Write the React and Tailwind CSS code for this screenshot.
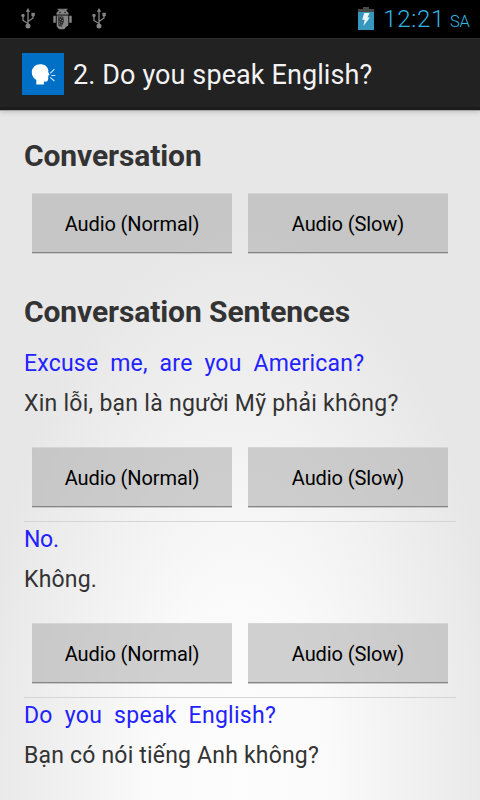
import clsx from "clsx";

const sentences = [
    { english: "Excuse  me,  are  you  American?", vietnamese: "Xin lỗi, bạn là người Mỹ phải không?", englishClass: "tracking-[0.22px]", vietnameseClass: "tracking-[0.27px]" },
    { english: "No.", vietnamese: "Không.", englishClass: "-tracking-[0.3px]", vietnameseClass: "tracking-[0.2px]" },
    { english: "Do  you  speak  English?", vietnamese: "Bạn có nói tiếng Anh không?", englishClass: "tracking-[0.28px]", vietnameseClass: "tracking-[0.19px]" },
];

const UsbIcon = () => (
    <svg width="16" height="22" viewBox="0 0 16 22" fill="none" stroke="#858585" strokeWidth="1.3">
        <path d="M8 3v14M8 15.5 3 12.5V8M8 13.5l5-3.5V6.5" />
        <path d="M8 0l2.2 3.8H5.8zM8 15.6a2.5 2.5 0 1 1 0 5A2.5 2.5 0 1 1 8 15.6z" fill="#858585" stroke="none" />
        <circle cx="3" cy="7.5" r="1.7" fill="#858585" stroke="none" />
        <path d="M11.4 4.8h3.4v3.4h-3.4z" fill="#858585" stroke="none" />
    </svg>
);

const DebugIcon = () => (
    <svg width="19" height="22" viewBox="0 0 19 22" fill="#858585">
        <path d="M4.6.8 6 2.6a7 7 0 0 1 7 0L14.4.8M3.6 6.2a6 5 0 0 1 11.8 0z" stroke="#858585" strokeWidth=".7" />
        <path d="M3.7 7.6h11.6v10l-2.6 1.6-1.4 2H6.2l-2.5-2.6zM.3 7.8h2.5v7H.3zM16.2 7.8h2.5v7h-2.5z" />
        <circle cx="7" cy="4.5" r=".7" fill="#000" />
        <circle cx="12" cy="4.5" r=".7" fill="#000" />
        {/* Spotted belly */}
        <path d="M4.8 8.6h5.4l.8 4.4-2.3 5.8-3.2-.8z" fill="#2c2c2c" />
        <path d="M5.6 10h1M8.4 9.4h1M7 11.6h1M9.2 12.4h1M5.4 13.4h1M7.8 14.4h1M6 15.8h1M7.6 17h1" stroke="#858585" strokeWidth="1" />
    </svg>
);

const BatteryIcon = () => (
    <svg width="16" height="24" viewBox="0 0 16 24">
        <path d="M5 0h6v2h5v4H0V2h5z" fill="#484848" />
        <path d="M0 5h16v18H0z" fill="#3597bd" />
        <path d="M6.2 6h5.4L9.5 10.4h2.4L5.4 19l1.3-6.2H4.2z" fill="#e9f5f9" />
    </svg>
);

// Talking head launcher icon
const AppIcon = () => (
    <svg className="shrink-0 mb-px" width="42" height="42" viewBox="0 0 42 42">
        <path d="M0 0h42v42H0z" fill="#0070c6" />
        <path d="M14.3 31.6V27c-2.8-2-4.5-4.6-4.5-7.6 0-4.9 3.7-8.1 8.5-8.1 4.2 0 7.4 2 8.1 6.2l-.2 1.5 1.4 2.9-1.5.7.5 1-.8.7.6.7-.8 2.8c-.7 1.2-2.1.9-3.7.8v3z" fill="#fff" />
        <path d="m28.2 20.3 4.2-4.2M29.3 22.5h4M28.2 24.3l4.2 3.7" stroke="#d3e8f7" strokeWidth="1.1" />
    </svg>
);

const StatusBar = () => (
    <div className="h-[38px] bg-black flex items-center pl-5 pr-[10px]">
        <UsbIcon />
        <div className="ml-[17px] mr-[19px]"><DebugIcon /></div>
        <UsbIcon />
        <div className="ml-auto flex items-baseline text-[#33b5e5]">
            <div className="self-center mr-[9px]"><BatteryIcon /></div>
            <span className="text-2xl leading-[40px] font-light tracking-[0.7px]">12:21</span>
            <span className="ml-[5px] text-[16.5px] w-5 font-light -tracking-[0.3px]">SA</span>
        </div>
    </div>
);

const ActionBar = () => (
    <header className="relative h-[72px] shrink-0 bg-[#222] border-t border-[#2c2c2c] flex items-center pl-[22px] shadow-[inset_0_-3px_0_#1b1b1b,0_1px_0_#a5a5a5,0_2px_5px_#0000002e]">
        <AppIcon />
        <h1 className="ml-[9px] pt-px text-[27px] tracking-[0.1px] text-[#f3f3f3] whitespace-nowrap">2. Do you speak English?</h1>
    </header>
);

const AudioButton = ({ label }) => (
    <button className="h-[60px] flex-1 bg-[#a6a6a6]/50 border-t border-t-[#d5d5d5] border-b border-b-[#858585] shadow-[0_1px_0_#c9c9c9] pt-[2px] text-[20px] -tracking-[0.1px] text-black">
        {label}
    </button>
);

const AudioButtons = () => (
    <div className="flex gap-4 px-2">
        <AudioButton label="Audio (Normal)" />
        <AudioButton label="Audio (Slow)" />
    </div>
);

const Sentence = ({ english, vietnamese, englishClass, vietnameseClass, last }) => (
    <li className={clsx(!last && "h-44 border-b border-[#d5d5d5]")}>
        <p className={clsx("h-[39px] leading-[36px] text-[23px] text-[#2222ff] whitespace-pre", englishClass)}>{english}</p>
        <p className={clsx("h-[62px] leading-[38px] text-[23px] text-[#333] whitespace-pre", vietnameseClass)}>{vietnamese}</p>
        {!last && <AudioButtons />}
    </li>
);

const App = () => {
    return (
        <div className="w-[480px] h-[800px] overflow-hidden flex flex-col font-['Roboto',sans-serif]">
            <StatusBar />
            <ActionBar />
            <main className="flex-1 min-h-0 overflow-hidden px-6 bg-[radial-gradient(ellipse_265px_560px_at_50%_98%,#fdfdfd_0%,#fafafa_35%,#eeeeee_75%,#e7e7e7_100%)]">
                <h2 className="h-[83px] pt-[27px] text-[30px] leading-[38px] -tracking-[0.1px] font-bold text-[#333]">Conversation</h2>
                <AudioButtons />
                <h2 className="h-[93px] pt-[40px] text-[30px] leading-[38px] -tracking-[0.1px] font-bold text-[#333]">Conversation Sentences</h2>
                <ul>
                    {sentences.map((sentence, i) => (
                        <Sentence key={i} {...sentence} last={i === sentences.length - 1} />
                    ))}
                </ul>
            </main>
        </div>
    );
};

export default App;
